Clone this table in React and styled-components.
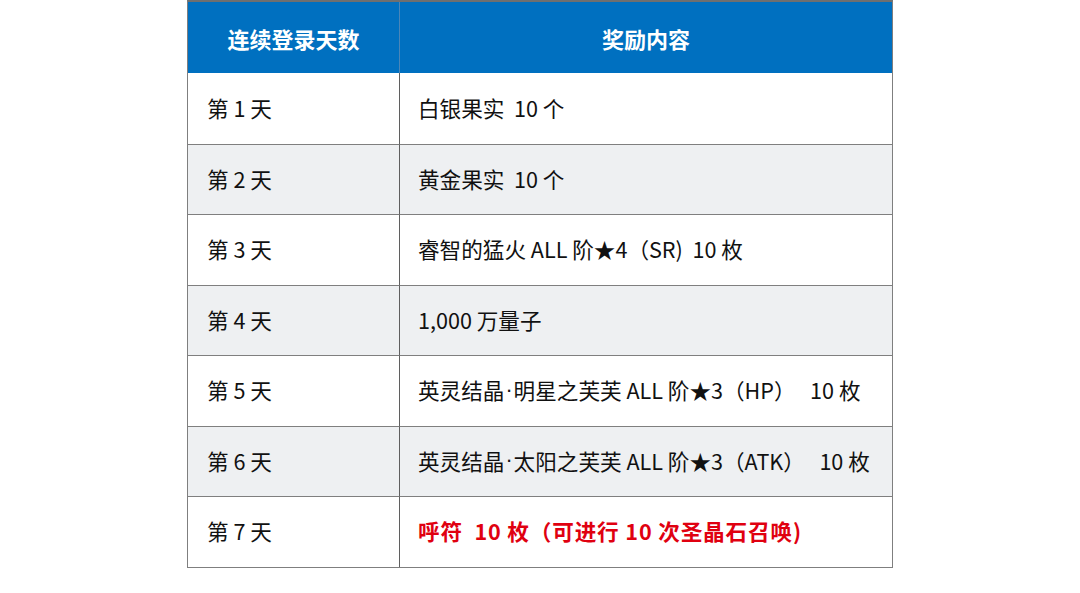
import React from "react";
import styled, { createGlobalStyle } from "styled-components";

const Global = createGlobalStyle`
  html, body { margin: 0; padding: 0; background: #ffffff; }
  body { font-family: "Noto Sans CJK SC", "Noto Sans", sans-serif; }
`;

const Table = styled.div`
  width: 706px;
  margin: 0 auto;
  display: grid;
  grid-template-columns: 211px 1fr;
  border-left: 1px solid #7f7f7f;
  border-right: 1px solid #7f7f7f;
  border-top: 2px solid #6f6f6f;
  border-bottom: 1px solid #7f7f7f;
  box-sizing: border-box;
`;

const HeadCell = styled.div`
  height: 71px;
  background: #0070c0;
  color: #ffffff;
  font-weight: 700;
  font-size: 22px;
  display: flex;
  align-items: center;
  justify-content: center;
  border-left: ${(p) => (p.$first ? "none" : "1px solid #4a86b8")};
  box-sizing: border-box;
`;

const Cell = styled.div`
  height: 70.5px;
  box-sizing: border-box;
  background: ${(p) => (p.$alt ? "#eef0f2" : "#ffffff")};
  border-top: ${(p) => (p.$top ? "none" : "1px solid #7f7f7f")};
  border-left: ${(p) => (p.$first ? "none" : "1px solid #5f5f5f")};
  display: flex;
  align-items: center;
  padding-left: ${(p) => (p.$first ? "19px" : "18px")};
  font-size: 21.6px;
  color: ${(p) => (p.$red ? "#e00010" : "#111111")};
  font-weight: ${(p) => (p.$red ? 700 : 400)};
  letter-spacing: ${(p) => (p.$red ? "0.85px" : "0")};
  white-space: pre;
  padding-bottom: 2px;
`;

const Dot = styled.span`
  font-family: "Liberation Sans", sans-serif;
  margin: 0 1px;
`;

const rows = [
  ["第 1 天", "白银果实  10 个"],
  ["第 2 天", "黄金果实  10 个"],
  ["第 3 天", "睿智的猛火 ALL 阶★4（SR)  10 枚"],
  ["第 4 天", "1,000 万量子"],
  ["第 5 天", ["英灵结晶", "明星之芙芙 ALL 阶★3（HP）   10 枚"]],
  ["第 6 天", ["英灵结晶", "太阳之芙芙 ALL 阶★3（ATK）   10 枚"]],
  ["第 7 天", "呼符  10 枚（可进行 10 次圣晶石召唤)", true],
];

export default function App() {
  return (
    <>
      <Global />
      <Table>
        <HeadCell $first>连续登录天数</HeadCell>
        <HeadCell>奖励内容</HeadCell>
        {rows.map(([day, reward, red], i) => (
          <React.Fragment key={day}>
            <Cell $first $alt={i % 2 === 1} $top={i === 0}>
              {day}
            </Cell>
            <Cell $alt={i % 2 === 1} $top={i === 0} $red={red}>
              {Array.isArray(reward) ? (
                <>
                  {reward[0]}
                  <Dot>·</Dot>
                  {reward[1]}
                </>
              ) : (
                reward
              )}
            </Cell>
          </React.Fragment>
        ))}
      </Table>
    </>
  );
}
